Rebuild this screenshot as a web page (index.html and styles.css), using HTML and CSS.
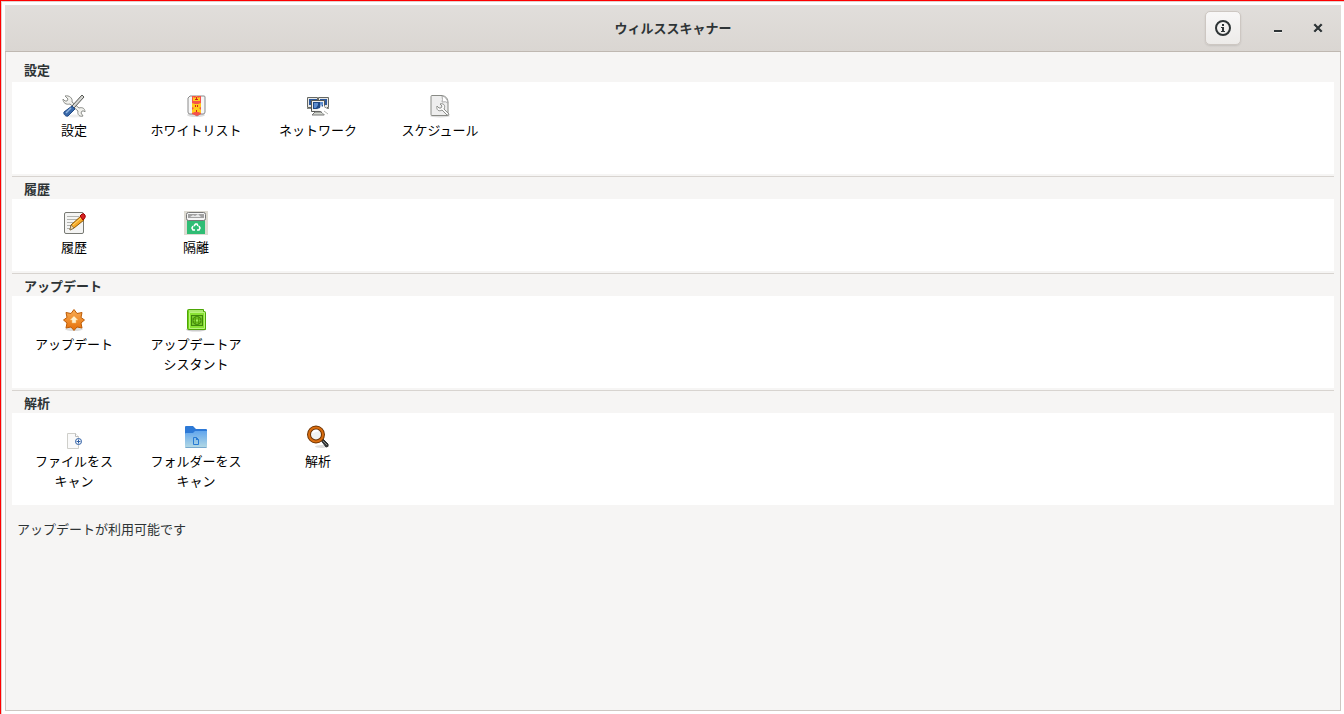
FILE: index.html
```html
<!DOCTYPE html>
<html lang="ja">
<head>
    <meta charset="UTF-8">
    <title>ウィルススキャナー</title>
    <link rel="stylesheet" href="styles.css">
</head>
<body>
    <div class="window">
        <!-- Title bar -->
        <header class="titlebar">
            <h1>ウィルススキャナー</h1>
            <div class="controls">
                <button class="info-btn" aria-label="情報">
                    <svg width="16" height="16" viewBox="0 0 16 16"><circle cx="8" cy="8" r="7" fill="none" stroke="#2e3436" stroke-width="2"/><path d="M7 4h2v2H7zM6 7h3v4h1v1H6v-1h1V8H6z" fill="#2e3436"/></svg>
                </button>
                <button class="win-btn" aria-label="最小化">
                    <svg width="16" height="16" viewBox="0 0 16 16"><path d="M4 10h8v2H4z" fill="#2e3436"/><path d="M4 12h8v1H4z" fill="#f2f1ef"/></svg>
                </button>
                <button class="win-btn" aria-label="閉じる">
                    <svg width="16" height="16" viewBox="0 0 16 16"><path d="M4.500 5.500l7 7M11.500 5.500l-7 7" stroke="#f2f1ef" stroke-width="2"/><path d="M4.300 4.300l7.400 7.400M11.700 4.300l-7.400 7.400" stroke="#2e3436" stroke-width="2.300"/></svg>
                </button>
            </div>
        </header>

        <main class="content">
            <!-- Settings -->
            <section class="section">
                <h2>設定</h2>
                <div class="panel tall">
                    <button class="item">
                        <svg class="icon" viewBox="0 0 24 24">
                            <ellipse cx="12" cy="22" rx="10" ry="1.500" fill="#eee"/>
                            <path d="M3 2l3 3-1 2-2 0-2-2C1 9 4 11 8 10l8 7c-1 4 2 6 5 5l-2-3 1-2h2l1 1c0-4-3-5-6-4L10 8c1-4-3-7-7-6z" fill="#f1f1ed" stroke="#8d8f8b"/>
                            <path d="M20 1l2 2-10 11-2-2z" fill="#d7d8d5" stroke="#555753"/>
                            <path d="M10 12l3 3-7 7c-2 1-5-2-4-4z" fill="#3767a8" stroke="#204a87"/>
                            <path d="M9 14l-5 5" stroke="#91b5df" stroke-width="1.500"/>
                        </svg>
                        <span>設定</span>
                    </button>
                    <button class="item">
                        <svg class="icon" viewBox="0 0 24 24">
                            <ellipse cx="12" cy="21" rx="9" ry="2" fill="#ddd"/>
                            <path d="M6 2h14q1 0 1 1v15q0 2-2 2h-3l-3 2-3-2H6q-2 0-2-2V4z" fill="#f6f6f6" stroke="#8a8a8a"/>
                            <path d="M8 2h9v18l-4 2-5-2z" fill="#f4524a"/>
                            <path d="M9 3l2 1 1.500-2L14 4l2-1v4H9zM8 9l3 1h3l3-1v4l-2 1 2 2v3l-3-1h-3l-3 1v-3l2-2-2-1z" fill="#ffcb1c"/>
                            <path d="M12 3h1v3h-1zM11 5h3v1h-3zM11 11h1v2h-1zM13 11h1v2h-1zM12 16h1v2h-1z" fill="#d42018"/>
                        </svg>
                        <span>ホワイトリスト</span>
                    </button>
                    <button class="item">
                        <svg class="icon" viewBox="0 0 24 24">
                            <path d="M1.500 3.500h10v10h-10zM12.500 3.500h10v10h-10z" fill="#e8e8e6" stroke="#666862"/>
                            <path d="M3 5h8v6H3zM14 5h7v6h-7z" fill="#2d599d"/>
                            <path d="M1 14h5v1H1zM18 14h5v1h-5z" fill="#888a85"/>
                            <path d="M5.500 6.500h13v11h-13z" fill="#f1f1ef" stroke="#555753"/>
                            <path d="M7 8h10v7H7z" fill="#204a87"/>
                            <path d="M8 9h4v2l-2 3H8zM14 8h3v3l-3 1z" fill="#5d8dcf"/>
                            <path d="M9 18h6l3 3H6z" fill="#d3d7cf" stroke="#777"/>
                            <path d="M15 10l1 3 2-2 1 3 2-1-1 3 2 3-2 1-4-2-5-3 3-1z" fill="#fff"/>
                            <path d="M18 17l4 3M16 19l3 2" stroke="#b4b6b2"/>
                        </svg>
                        <span>ネットワーク</span>
                    </button>
                    <button class="item">
                        <svg class="icon" viewBox="0 0 24 24">
                            <ellipse cx="12" cy="22" rx="10" ry="1.500" fill="#ddd"/>
                            <path d="M4 1.500h10q6 1 6 7v13H4q-1 0-1-1v-18q0-1 1-1z" fill="#eee" stroke="#888a85"/>
                            <path d="M14 2q1 4 0 6 4-1 6 1-1-6-6-7z" fill="#fff" stroke="#aaa"/>
                            <path d="M12 10l2 2-1 2-2 0-2-2c-1 4 2 6 5 4l5 5q2 1 2-1l-5-5c2-4-1-6-4-5z" fill="#fafafa" stroke="#8d8f8b"/>
                        </svg>
                        <span>スケジュール</span>
                    </button>
                </div>
            </section>

            <!-- History -->
            <section class="section">
                <h2>履歴</h2>
                <div class="panel">
                    <button class="item">
                        <svg class="icon" viewBox="0 0 24 24">
                            <rect x="2.500" y="1.500" width="19" height="21" rx="1.500" fill="#f4f4f3" stroke="#777973"/>
                            <path d="M5 5.500h12M5 8.500h11M5 11.500h8M5 14.500h6M5 17.500h4" stroke="#b1b3af"/>
                            <path d="M9 14l10-9 3 4-10 8-4 2z" fill="#f7a928" stroke="#8f5902"/>
                            <path d="M9 14l3 3-4 2z" fill="#f2d8a7" stroke="#555" stroke-width=".5"/>
                            <path d="M11 14l8-7" stroke="#ffdc76"/>
                            <path d="M18 5l2-2q2-1 3 1 1 2-1 4l-1 1z" fill="#d52222" stroke="#a40000"/>
                        </svg>
                        <span>履歴</span>
                    </button>
                    <button class="item">
                        <svg class="icon" viewBox="0 0 24 24">
                            <path d="M0 0h24v24H0z" fill="#dedbd2"/>
                            <path d="M3 9h18v14H3z" fill="#2fbd74"/>
                            <rect x="2.500" y="1.500" width="19" height="8" rx="2" fill="#f5f5f5" stroke="#777"/>
                            <path d="M4 3h16v4H4z" fill="#a2a2a2"/>
                            <path d="M6 6l3-2 2 1 3-2 3 3z" fill="#e7e7e7"/>
                            <path d="M10 15l1.500-2h1.500l1 2M15 15l1 2-1 2h-2M11 19H9l-1-2 1-2" fill="none" stroke="#fff" stroke-width="1.600"/>
                        </svg>
                        <span>隔離</span>
                    </button>
                </div>
            </section>

            <!-- Updates -->
            <section class="section">
                <h2>アップデート</h2>
                <div class="panel">
                    <button class="item">
                        <svg class="icon" viewBox="0 0 24 24">
                            <defs>
                                <linearGradient id="orange" x2="0" y2="1"><stop stop-color="#f8ad55"/><stop offset="1" stop-color="#e66e08"/></linearGradient>
                            </defs>
                            <ellipse cx="12" cy="21" rx="9" ry="2" fill="#ddd"/>
                            <path d="M12 1.500l3 4 5-1-1 5 3.500 2.500-3.500 3 1 5-5-1-3 3.500L9 19l-5 1 1-5-3.500-3L5 9.500l-1-5 5 1z" fill="url(#orange)" stroke="#bd5b05"/>
                            <path d="M12 8l4 4h-2v3h-4v-3H8z" fill="#fff0cf" stroke="#f5b65e" stroke-width=".5"/>
                        </svg>
                        <span>アップデート</span>
                    </button>
                    <button class="item">
                        <svg class="icon" viewBox="0 0 24 24">
                            <ellipse cx="12" cy="21.500" rx="10" ry="2" fill="#ccc"/>
                            <path d="M3.500 2.500q0-1 1-1h15v2h1q1 0 1 1v17h-17q-1 0-1-1z" fill="#73d216" stroke="#4ca606"/>
                            <path d="M5 3h14" stroke="#e5ffc7"/>
                            <path d="M5.500 4.500h15v16h-15z" fill="#8ae234" stroke="#b8f47d"/>
                            <rect x="7.500" y="7.500" width="11" height="10" fill="#78cc2b" stroke="#3f860c"/>
                            <circle cx="13" cy="12.500" r="4" fill="none" stroke="#3f860c"/>
                            <path d="M11.500 8v9M14.500 8v9M8 11h10M8 14h10" stroke="#4e9a06" stroke-width=".8"/>
                            <path d="M12 11.500h2v2h-2z" fill="#a2ee5e"/>
                        </svg>
                        <span>アップデートアシスタント</span>
                    </button>
                </div>
            </section>

            <!-- Analysis -->
            <section class="section">
                <h2>解析</h2>
                <div class="panel">
                    <button class="item">
                        <svg class="icon" viewBox="0 0 24 24">
                            <path d="M5.500 8.500h8l3 3v12h-11z" fill="#fafafa" stroke="#cfcfca"/>
                            <path d="M13.500 8.500v3h3" fill="#fff" stroke="#bbb"/>
                            <circle cx="16.500" cy="16.500" r="3" fill="#fff" stroke="#2c5da4"/>
                            <path d="M14.500 16.500h4M16.500 14.500v4" stroke="#2c5da4"/>
                        </svg>
                        <span>ファイルをスキャン</span>
                    </button>
                    <button class="item">
                        <svg class="icon" viewBox="0 0 24 24">
                            <defs>
                                <linearGradient id="folder" x2="0" y2="1"><stop stop-color="#62a6ed"/><stop offset="1" stop-color="#b5dae4"/></linearGradient>
                            </defs>
                            <path d="M1 2q0-1 1-1h7l3 3h10q1 0 1 1v17H1z" fill="#2d79d6"/>
                            <path d="M1 9q0-1 1-1h7l2-2h12v16q0 1-1 1H2q-1 0-1-1z" fill="url(#folder)"/>
                            <path d="M1.500 22.500h21" stroke="#76a8ce"/>
                            <path d="M9.500 12.500h3l2 2v5h-5z" fill="none" stroke="#287bd5"/>
                            <path d="M12 12v3h3z" fill="#287bd5"/>
                        </svg>
                        <span>フォルダーをスキャン</span>
                    </button>
                    <button class="item">
                        <svg class="icon" viewBox="0 0 24 24">
                            <ellipse cx="16" cy="21.500" rx="7" ry="1.500" fill="#ddd"/>
                            <path d="M14 14l2-1 6 6q1 3-2 3z" fill="#2e3436" stroke="#333"/>
                            <path d="M17 16l4 4" stroke="#888a85"/>
                            <circle cx="10" cy="9.500" r="7" fill="#f1f3f1" stroke="#6d3302" stroke-width="4"/>
                            <circle cx="10" cy="9.500" r="7" fill="none" stroke="#d96d10" stroke-width="2"/>
                            <path d="M7 8q1-3 5-2" fill="none" stroke="#fff" stroke-width="2"/>
                        </svg>
                        <span>解析</span>
                    </button>
                </div>
            </section>

            <p class="status">アップデートが利用可能です</p>
        </main>
    </div>
</body>
</html>
```
FILE: styles.css
```css
* {
    box-sizing: border-box;
}

body {
    margin: 0;
    height: 100vh;
    display: flex;
    padding: 4px 3px 3px 4px;
    background-color: #fff;
    border-top: 1px solid #f00;
    border-left: 1px solid #f00;
    box-shadow: inset 1px 1px 0 #e3cfcc;
    font-family: "Noto Sans CJK JP", sans-serif;
    font-size: 13px;
    line-height: 20px;
    color: #000;
}

h1,
h2,
p {
    margin: 0;
    font-size: 13px;
}

button {
    padding: 0;
    border: none;
    background: none;
    font: inherit;
    color: inherit;
}

.window {
    flex: 1;
    display: flex;
    flex-direction: column;
}

/* Title bar */
.titlebar {
    display: grid;
    grid-template-columns: 1fr auto 1fr;
    align-items: center;
    height: 47px;
    padding: 0 15px;
    background: linear-gradient(#e1dedb, #dad6d2);
    border-bottom: 1px solid #bfb8b1;
    color: #2e3436;
}

.titlebar h1 {
    grid-column: 2;
}

.controls {
    display: flex;
    justify-content: flex-end;
    align-items: center;
    gap: 24px;
}

.controls svg {
    display: block;
    margin: auto;
}

.info-btn {
    width: 36px;
    height: 34px;
    margin-right: 5px;
    background: linear-gradient(#f8f7f7, #edebe9);
    border: 1px solid #cdc7c2;
    border-radius: 5px;
    box-shadow: 0 1px 2px rgba(0, 0, 0, 0.1);
}

.win-btn {
    width: 16px;
    height: 16px;
}

/* Sections */
.content {
    flex: 1;
    padding: 8px 6px;
    background-color: #f6f5f4;
    border: 1px solid #cdc7c2;
    border-top: none;
}

.section + .section {
    margin-top: 2px;
    padding-top: 2px;
    border-top: 1px solid #d8d4d0;
}

.section h2 {
    padding-left: 12px;
    color: #2e3436;
}

.section:first-child h2 {
    padding-bottom: 2px;
}

.panel {
    display: flex;
    align-items: flex-start;
    gap: 26px;
    padding: 12px 14px 14px;
    background-color: #fff;
}

.panel.tall {
    min-height: 92px;
}

.item {
    width: 96px;
    display: flex;
    flex-direction: column;
    align-items: center;
    gap: 2px;
    line-break: strict;
}

.icon {
    width: 24px;
    height: 24px;
}

.status {
    padding: 14px 5px;
    color: #2e3436;
}
```
